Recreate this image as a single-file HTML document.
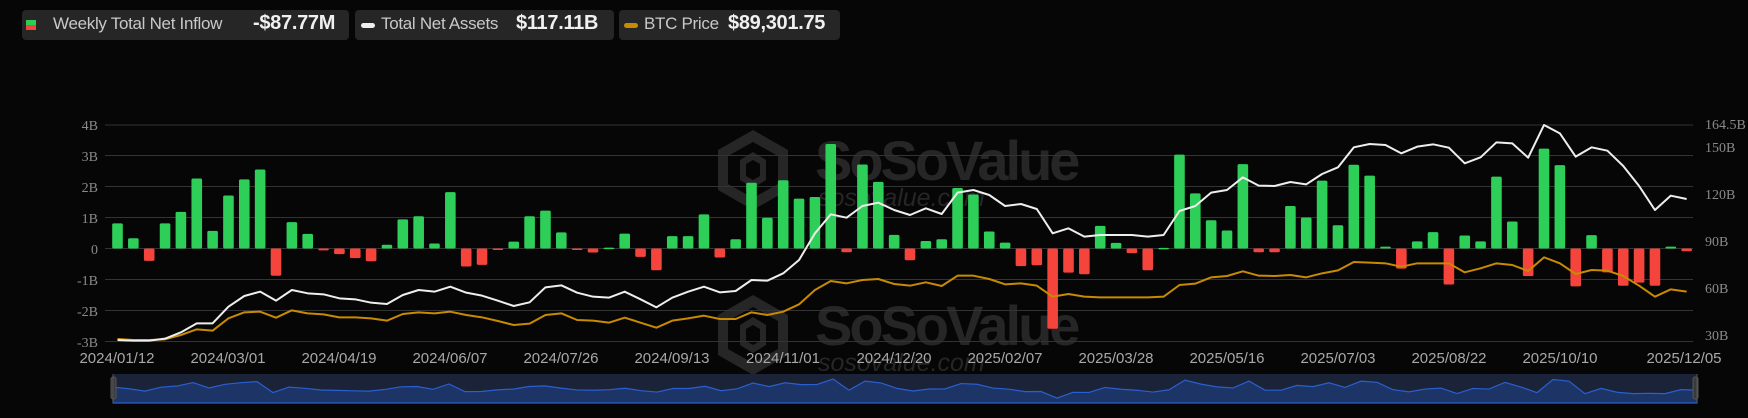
<!DOCTYPE html>
<html><head><meta charset="utf-8"><style>
html,body{margin:0;padding:0;background:#060606;width:1748px;height:418px;overflow:hidden;font-family:"Liberation Sans",sans-serif}
.box{position:absolute;top:10px;height:30px;background:#262626;border-radius:4px}
.lbl{position:absolute;top:4px;font-size:17px;color:#c8c8c8;white-space:nowrap;letter-spacing:-0.3px}
.val{position:absolute;top:2px;font-size:20px;font-weight:bold;color:#f0f0f0;white-space:nowrap;letter-spacing:-0.3px}
svg{position:absolute;left:0;top:0}
</style></head><body>
<div class="box" style="left:22px;width:327px">
 <div style="position:absolute;left:4px;top:10px;width:10px;height:5px;background:#2ecc55"></div>
 <div style="position:absolute;left:4px;top:15px;width:10px;height:5px;background:#f0453c"></div>
 <div class="lbl" style="left:31px">Weekly Total Net Inflow</div>
 <div class="val" style="left:231px">-$87.77M</div>
</div>
<div class="box" style="left:355px;width:259px">
 <div style="position:absolute;left:6px;top:13px;width:14px;height:5px;border-radius:3px;background:#eee"></div>
 <div class="lbl" style="left:26px">Total Net Assets</div>
 <div class="val" style="left:161px">$117.11B</div>
</div>
<div class="box" style="left:619px;width:221px">
 <div style="position:absolute;left:5px;top:13px;width:14px;height:5px;border-radius:3px;background:#c88a00"></div>
 <div class="lbl" style="left:25px">BTC Price</div>
 <div class="val" style="left:109px">$89,301.75</div>
</div>
<svg id="c" width="1748" height="418" xmlns="http://www.w3.org/2000/svg">
 <g fill="#262626">
  <g id="wm">
   <path d="M753 130 L788 150 L788 190 L753 210 L718 190 L718 150 Z M753 142 L728 156 L728 184 L753 198 L778 184 L778 156 Z" fill-rule="evenodd"/>
   <path d="M740 160 L753 152 L766 160 L766 180 L753 188 L740 180 Z M746 164 L746 176 L753 180 L760 176 L760 164 L753 160 Z" fill-rule="evenodd"/>
   <text x="815" y="180" font-size="56" font-weight="bold" font-family="Liberation Sans,sans-serif" letter-spacing="-3">SoSoValue</text>
   <text x="818" y="206" font-size="25" font-style="italic" font-family="Liberation Sans,sans-serif">sosovalue.com</text>
  </g>
  <use href="#wm" y="165"/>
 </g>
 <g id="grid" stroke="#333" stroke-width="1"></g>
 <g font-family="Liberation Serif,serif" font-size="14" fill="#8a8a8a" text-anchor="end">
  <text x="98" y="130">4B</text><text x="98" y="161">3B</text><text x="98" y="192">2B</text><text x="98" y="223">1B</text><text x="98" y="254">0</text><text x="98" y="285">-1B</text><text x="98" y="316">-2B</text><text x="98" y="347">-3B</text>
 </g>
 <g font-family="Liberation Serif,serif" font-size="14" fill="#8a8a8a">
  <text x="1705" y="129">164.5B</text><text x="1705" y="152">150B</text><text x="1705" y="199">120B</text><text x="1705" y="246">90B</text><text x="1705" y="293">60B</text><text x="1705" y="340">30B</text>
 </g>
 <g id="bars"></g>
 <polyline id="ol" fill="none" stroke="#c88a00" stroke-width="2" stroke-linejoin="round"/>
 <polyline id="wl" fill="none" stroke="#eeeeee" stroke-width="2" stroke-linejoin="round"/>
 <g font-family="Liberation Sans,sans-serif" font-size="15" fill="#a8a8a8" text-anchor="middle">
  <text x="117" y="363">2024/01/12</text><text x="228" y="363">2024/03/01</text><text x="339" y="363">2024/04/19</text><text x="450" y="363">2024/06/07</text><text x="561" y="363">2024/07/26</text><text x="672" y="363">2024/09/13</text><text x="783" y="363">2024/11/01</text><text x="894" y="363">2024/12/20</text><text x="1005" y="363">2025/02/07</text><text x="1116" y="363">2025/03/28</text><text x="1227" y="363">2025/05/16</text><text x="1338" y="363">2025/07/03</text><text x="1449" y="363">2025/08/22</text><text x="1560" y="363">2025/10/10</text><text x="1684" y="363">2025/12/05</text>
 </g>
 <rect x="113" y="374" width="1584" height="29" fill="#1a2338"/>
 <path id="nav" fill="#1d3466" stroke="#2a5fd0" stroke-width="1.2"/>
 <rect x="111" y="377" width="5" height="22" rx="2" fill="#3a3a3a" stroke="#555"/>
 <rect x="1693" y="377" width="5" height="22" rx="2" fill="#3a3a3a" stroke="#555"/>
 <line x1="113" y1="374" x2="113" y2="403" stroke="#555"/>
 <line x1="1697" y1="374" x2="1697" y2="403" stroke="#555"/>
</svg>
<script>
var v=[0.81,0.33,-0.40,0.81,1.18,2.26,0.57,1.71,2.23,2.55,-0.88,0.85,0.47,-0.06,-0.18,-0.31,-0.41,0.12,0.94,1.04,0.16,1.82,-0.58,-0.53,-0.02,0.22,1.04,1.22,0.52,-0.05,-0.13,0.03,0.48,-0.27,-0.70,0.40,0.40,1.10,-0.29,0.30,2.12,0.99,2.2,1.61,1.66,3.37,-0.12,2.71,2.15,0.44,-0.38,0.24,0.30,1.95,1.74,0.55,0.19,-0.57,-0.54,-2.59,-0.78,-0.83,0.73,0.18,-0.15,-0.70,0.02,3.03,1.78,0.91,0.58,2.72,-0.12,-0.12,1.37,1.0,2.19,0.75,2.70,2.35,0.06,-0.65,0.23,0.53,-1.16,0.42,0.23,2.32,0.87,-0.89,3.22,2.69,-1.22,0.43,-0.77,-1.2,-1.1,-1.2,0.06,-0.09];
var w=[720,722,722,716,697,670,670,620,588,575,602,570,580,583,595,598,608,612,585,570,575,560,578,587,602,618,607,562,556,578,590,593,575,598,622,593,575,560,577,573,540,542,520,480,400,343,353,318,308,330,345,325,342,278,270,285,318,312,327,400,385,410,405,405,405,410,405,333,318,278,270,232,257,258,246,253,222,202,142,132,135,160,140,133,143,190,172,127,130,173,75,100,170,142,152,198,258,330,287,297];
var o=[717,720,720,718,705,688,692,655,637,635,653,631,640,643,652,652,655,662,642,637,640,635,645,652,663,675,671,645,640,660,662,668,653,668,683,662,655,647,657,657,637,645,635,613,570,543,550,540,537,552,557,547,558,527,527,537,553,550,557,590,582,590,592,592,592,592,590,555,551,532,528,514,527,528,525,532,520,511,486,488,490,500,490,490,490,517,505,490,495,513,472,490,522,510,512,528,557,590,568,575];
var NS="http://www.w3.org/2000/svg";
var g=document.getElementById('grid');
[125,155.5,186.5,217.5,248.5,279.5,310.5,341.5].forEach(function(y){var l=document.createElementNS(NS,'line');l.setAttribute('x1',105);l.setAttribute('x2',1693);l.setAttribute('y1',y);l.setAttribute('y2',y);g.appendChild(l);});
var b=document.getElementById('bars'),wp=[],op=[],np=['113,403'];
for(var i=0;i<100;i++){var x=117.5+i*15.85,val=v[i],h=Math.abs(val)*31,y=val>=0?248.5-h:248.5;
 var r=document.createElementNS(NS,'rect');r.setAttribute('x',x-5.3);r.setAttribute('width',10.6);r.setAttribute('y',y);r.setAttribute('height',Math.max(h,1.5));r.setAttribute('rx',1.5);r.setAttribute('fill',val>=0?'#2ecf58':'#f5443c');b.appendChild(r);
 wp.push(x+','+(100+w[i]/3));op.push(x+','+(100+o[i]/3));
 var nx=113+i*(1584/99);np.push(nx+','+(389.8-3.2*val));}
np.push('1697,403');
document.getElementById('wl').setAttribute('points',wp.join(' '));
document.getElementById('ol').setAttribute('points',op.join(' '));
document.getElementById('nav').setAttribute('d','M'+np.join(' L')+' Z');
</script>
</body></html>
